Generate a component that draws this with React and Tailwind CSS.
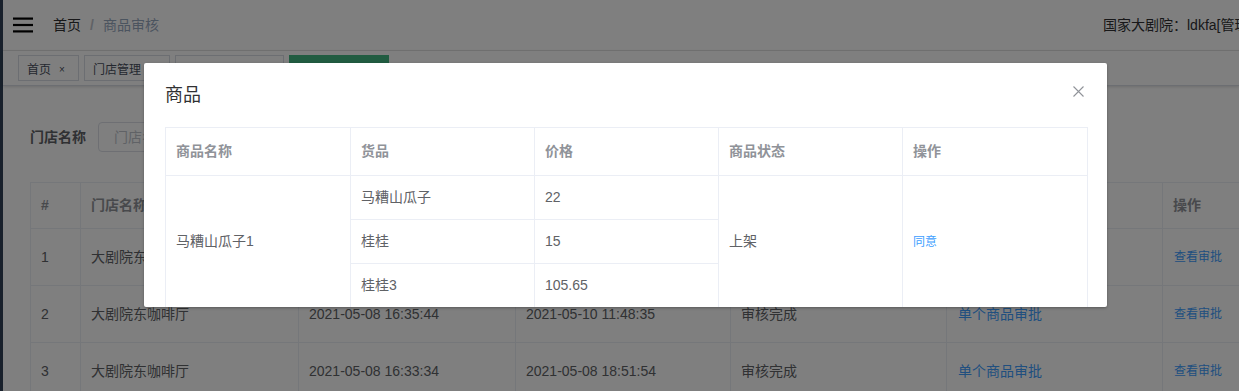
import React from "react";

const FONT = { fontFamily: '"Liberation Sans", "Noto Sans CJK SC", sans-serif' };

function Hamburger() {
  return (
    <svg width="20" height="16" viewBox="0 0 20 16">
      <rect x="0" y="0.5" width="20" height="2.2" fill="#000" />
      <rect x="0" y="6.9" width="20" height="2.2" fill="#000" />
      <rect x="0" y="13.3" width="20" height="2.2" fill="#000" />
    </svg>
  );
}

const bgRows = [
  ["1", "大剧院东咖啡厅", "2021-05-08 16:40:12", "2021-05-10 11:50:21", "审核完成"],
  ["2", "大剧院东咖啡厅", "2021-05-08 16:35:44", "2021-05-10 11:48:35", "审核完成"],
  ["3", "大剧院东咖啡厅", "2021-05-08 16:33:34", "2021-05-08 18:51:54", "审核完成"],
];

const colW = ["w-[50px]", "w-[218px]", "w-[217px]", "w-[215px]", "w-[216px]", "w-[216px]", "w-[100px]"];

function BgPage() {
  return (
    <div className="flex w-[1239px] h-[391px] bg-white" style={FONT}>
      <div className="w-[3px] shrink-0 bg-[#304156]" />
      <div className="flex-1 flex flex-col min-w-0">
        {/* navbar */}
        <div className="h-[51px] shrink-0 flex items-center border-b border-[#e6e6e6]">
          <div className="pl-[10px] pr-[20px] flex items-center">
            <Hamburger />
          </div>
          <div className="flex items-center text-[14px] leading-[20px]">
            <span className="text-[#303133]">首页</span>
            <span className="mx-[9px] text-[#c0c4cc] font-bold">/</span>
            <span className="text-[#97a8be]">商品审核</span>
          </div>
          <div className="flex-1" />
          <div className="w-[136px] shrink-0 whitespace-nowrap overflow-hidden text-[14px] text-[#303133]">
            国家大剧院：ldkfa[管理员]
          </div>
        </div>
        {/* tags view */}
        <div className="h-[35px] shrink-0 flex items-start gap-[5px] pl-[15px] pt-[4px] border-b border-[#d8dce5] shadow-[0_1px_3px_0_rgba(0,0,0,0.12),0_0_3px_0_rgba(0,0,0,0.04)]">
          <div className="w-[61px] h-[26px] border border-[#d8dce5] flex items-center pl-[8px] pt-[3px] text-[12px] leading-[16px] text-[#495060]">
            首页<span className="ml-[8px] text-[10px] text-[#495060]">×</span>
          </div>
          <div className="w-[86px] h-[26px] border border-[#d8dce5] flex items-center pl-[8px] pt-[3px] text-[12px] leading-[16px] text-[#495060]">
            门店管理<span className="ml-[8px] text-[10px]">×</span>
          </div>
          <div className="w-[109px] h-[26px] border border-[#d8dce5] flex items-center pl-[8px] pt-[6px] text-[12px] leading-[16px] text-[#495060]">
            门店商品管理<span className="ml-[8px] text-[10px]">×</span>
          </div>
          <div className="w-[100px] h-[26px] border border-[#42b983] bg-[#42b983] flex items-center pl-[8px] pt-[6px] text-[12px] leading-[16px] text-white">
            <span className="w-[8px] h-[8px] rounded-full bg-white mr-[4px]" />商品审核<span className="ml-[8px] text-[10px]">×</span>
          </div>
        </div>
        {/* content */}
        <div className="pl-[27px] pt-[36px]">
          <div className="flex items-center h-[30px]">
            <span className="text-[14px] font-bold text-[#606266] w-[68px]">门店名称</span>
            <div className="w-[200px] h-[30px] border border-[#dcdfe6] rounded-[4px] flex items-center pl-[15px] text-[14px] text-[#c0c4cc]">
              门店名称
            </div>
          </div>
          <div className="mt-[30px] border-t border-l border-[#ebeef5] w-[1232px]">
            <div className="flex h-[46px] border-b border-[#ebeef5] text-[14px] font-bold text-[#909399]">
              {["#", "门店名称", "提交时间", "审核时间", "审核状态", "商品审批", "操作"].map((h, i) => (
                <div key={i} className={`${colW[i]} shrink-0 border-r border-[#ebeef5] flex items-center pl-[10px]`}>
                  {h}
                </div>
              ))}
            </div>
            {bgRows.map((r, ri) => (
              <div key={ri} className="flex h-[57px] border-b border-[#ebeef5] text-[14px] text-[#606266]">
                {r.map((c, i) => (
                  <div key={i} className={`${colW[i]} shrink-0 border-r border-[#ebeef5] flex items-center pl-[10px]`}>
                    {c}
                  </div>
                ))}
                <div className={`${colW[5]} shrink-0 border-r border-[#ebeef5] flex items-center pl-[11px] text-[#409eff]`}>
                  单个商品审批
                </div>
                <div className={`${colW[6]} shrink-0 border-r border-[#ebeef5] flex items-center pl-[11px] text-[12px] text-[#409eff]`}>
                  查看审批
                </div>
              </div>
            ))}
          </div>
        </div>
      </div>
    </div>
  );
}

function Modal() {
  const cell = "border-r border-b border-[#ebeef5] px-[10px] text-left align-middle";
  return (
    <div
      className="absolute left-[144px] top-[63px] w-[963px] h-[244px] bg-white rounded-[2px] shadow-[0_1px_3px_rgba(0,0,0,0.3)] overflow-hidden"
      style={FONT}
    >
      <div className="relative h-[64px]">
        <div className="pt-[20px] pl-[21px] text-[18px] leading-[24px] text-[#303133]">商品</div>
        <svg className="absolute left-[929px] top-[23px]" width="11" height="11" viewBox="0 0 11 11">
          <path d="M0.5 0.5 L10.5 10.5 M10.5 0.5 L0.5 10.5" stroke="#909399" strokeWidth="1.1" fill="none" />
        </svg>
      </div>
      <div className="ml-[21px] w-[922px]">
        <table className="w-[922px] table-fixed border-collapse border-t border-l border-[#ebeef5]">
          <colgroup>
            <col className="w-[185px]" />
            <col className="w-[184px]" />
            <col className="w-[184px]" />
            <col className="w-[184px]" />
            <col className="w-[185px]" />
          </colgroup>
          <thead>
            <tr className="h-[48px] text-[14px] font-bold text-[#909399]">
              <th className={`${cell} font-bold`}>商品名称</th>
              <th className={`${cell} font-bold`}>货品</th>
              <th className={`${cell} font-bold`}>价格</th>
              <th className={`${cell} font-bold`}>商品状态</th>
              <th className={`${cell} font-bold`}>操作</th>
            </tr>
          </thead>
          <tbody className="text-[14px] text-[#606266]">
            <tr className="h-[44px]">
              <td className={cell} rowSpan={3}>马糟山瓜子1</td>
              <td className={cell}>马糟山瓜子</td>
              <td className={cell}>22</td>
              <td className={cell} rowSpan={3}>上架</td>
              <td className={`${cell} text-[12px] text-[#409eff]`} rowSpan={3}>同意</td>
            </tr>
            <tr className="h-[44px]">
              <td className={cell}>桂桂</td>
              <td className={cell}>15</td>
            </tr>
            <tr className="h-[44px]">
              <td className={cell}>桂桂3</td>
              <td className={cell}>105.65</td>
            </tr>
          </tbody>
        </table>
      </div>
    </div>
  );
}

export default function App() {
  return (
    <div className="relative w-[1239px] h-[391px] overflow-hidden">
      <BgPage />
      <div className="absolute inset-0 bg-black/50" />
      <Modal />
    </div>
  );
}
